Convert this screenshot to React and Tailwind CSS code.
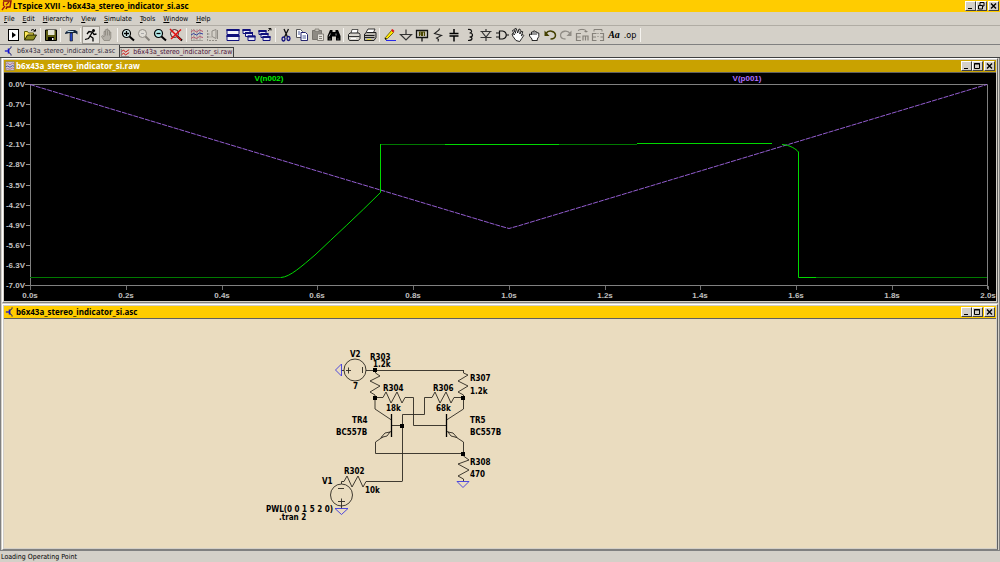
import React, { useState } from 'react';

const icons = {
  run: (
    <>
      <rect x="2.5" y="2.5" width="10" height="11" fill="#fff" stroke="#000" />
      <path d="M6 5v6l4-3z" fill="#000" />
    </>
  ),
  open: (
    <>
      <path d="M2.5 12.5v-8h3l1 1.5h5v2" fill="#ffe95c" stroke="#5c5c00" />
      <path d="M2.5 13l3-5h9l-3 5z" fill="#8c8c1e" stroke="#222200" />
      <path d="M9 3.5c1.5-1.5 3-1 4 .5m.5-1.8v2h-2" fill="none" stroke="#000" />
    </>
  ),
  save: (
    <>
      <path d="M2.5 3h11v10.5h-11z" fill="#5d5d12" stroke="#000" />
      <path d="M5 3h6.5v5h-6.5z" fill="#e4e4d4" />
      <path d="M5 10h6v3.5h-6z" fill="#000" />
      <path d="M9 11h1.5v2h-1.5z" fill="#fff" />
    </>
  ),
  hammer: (
    <>
      <path d="M2 6.5c1-3 4-3.5 7-3.5h3l2.5 1.5v3l-2-1.5h-6c-2 0-2 1-4.5 1z" fill="#12243c" />
      <path d="M4.5 4.5h6" stroke="#b9d8ee" />
      <path d="M7 6h2.5v8h-2.5z" fill="#2444c8" stroke="#111" strokeWidth=".6" />
    </>
  ),
  runner: (
    <>
      <circle cx="10.5" cy="3.5" r="1.5" fill="#000" />
      <path d="M9.5 5l-2.5 4 3 2v3.5M7 9l-1.5 2.5-3.5 1M4 7l2-2.5 3.5.5 1.5 2.5 2.5-.5" fill="none" stroke="#000" strokeWidth="1.3" />
    </>
  ),
  halt: (
    <path d="M5 13.5l-2.5-4 .8-1 1.7 1.5v-5.5h1.2v-1.7h1.5v-.8h1.3v1.5h1.5v1.5h1.3v6l-1.3 2.5zM6.5 4v4.5m2-5v5m2-4v4" fill="#b4b0a8" stroke="#8a867e" strokeWidth=".8" />
  ),
  zoomIn: (
    <>
      <circle cx="6.5" cy="6.5" r="4" fill="#d5efef" stroke="#000" strokeWidth="1.2" />
      <path d="M4 6.5h5M6.5 4v5" stroke="#000" strokeWidth="1.3" />
      <path d="M9.5 9.5l4.5 4" stroke="#000" strokeWidth="2" />
    </>
  ),
  pan: (
    <>
      <circle cx="6.5" cy="6.5" r="4" fill="#e0ddd6" stroke="#918d86" />
      <path d="M9.5 9.5l4 4" stroke="#85817a" strokeWidth="2" />
      <path d="M5 6.5h3" stroke="#aaa" />
    </>
  ),
  zoomOut: (
    <>
      <circle cx="6.5" cy="6.5" r="4" fill="#b5ecec" stroke="#000" strokeWidth="1.2" />
      <path d="M4.5 6.5h4" stroke="#000" strokeWidth="1.3" />
      <path d="M9.5 9.5l4.5 4" stroke="#000" strokeWidth="2" />
    </>
  ),
  zoomFit: (
    <>
      <circle cx="6.5" cy="6.5" r="4" fill="#e8d0cc" stroke="#402020" />
      <path d="M9.5 9.5l4.5 4" stroke="#000" strokeWidth="2" />
      <path d="M2 2l11 11M13 2.5l-10 9.5" stroke="#e01010" strokeWidth="1.5" />
    </>
  ),
  autorange: (
    <>
      <path d="M2.5 2v12M2 13.5h12M5 2v11M8 2v11M11 2v11" stroke="#85817a" strokeWidth=".6" />
      <path d="M2 5l2.5-2 3 2 3-2 3.5 1.5" fill="none" stroke="#b8586c" />
      <path d="M2 8l2.5-1.5 3 1.5 3-2 3.5 1" fill="none" stroke="#333e9c" />
      <path d="M2 11.5l2.5-1.5 3 1.5 3-2 3.5 1" fill="none" stroke="#b8586c" />
    </>
  ),
  plotSetup: (
    <>
      <path d="M2.5 3v10.5h10M2.5 7h3M2.5 10h4" fill="none" stroke="#918d86" strokeDasharray="2 1" />
      <path d="M7 4l4-1.5v9l-4-2zM12.5 3v9" fill="none" stroke="#918d86" />
    </>
  ),
  tile: (
    <>
      <path d="M2 2.5h12v5h-12zM2 8.5h12v5h-12z" fill="#f4f4f8" stroke="#10107c" />
      <path d="M1.5 3h13M1.5 9h13" stroke="#10107c" strokeWidth="2" />
    </>
  ),
  cascade: (
    <>
      <path d="M2 2.5h7v4h-7zM4.5 5.5h7v4h-7zM7 9h7v4.5h-7z" fill="#e8e8f4" stroke="#10107c" />
      <path d="M1.5 3h8M4 6h8M6.5 9.5h8" stroke="#10107c" strokeWidth="2" />
    </>
  ),
  closeAll: (
    <>
      <path d="M2 3.5h7v4h-7zM4 6.5h7v4h-7zM6 9.5h7v4h-7z" fill="#e8e8f4" stroke="#10107c" />
      <path d="M1.5 4h8M3.5 7h8M5.5 10h8" stroke="#10107c" strokeWidth="1.8" />
      <path d="M11 4l3-2.5M11.5 1.5h2.5v2" fill="none" stroke="#111" />
    </>
  ),
  cut: (
    <>
      <path d="M6 2l3.5 8M10.5 2l-4 8" stroke="#111" strokeWidth="1.3" />
      <ellipse cx="5.5" cy="12" rx="1.5" ry="2" fill="none" stroke="#10107c" strokeWidth="1.3" />
      <ellipse cx="10.5" cy="11.5" rx="1.5" ry="2" fill="none" stroke="#10107c" strokeWidth="1.3" />
    </>
  ),
  copy: (
    <>
      <path d="M2.5 2.5h4l2 2v6h-6z" fill="#fff" stroke="#555" />
      <path d="M7 5.5h4.5l2 2v6h-6.5z" fill="#fff" stroke="#23236e" />
      <path d="M4 5h2M4 7h2M8.5 9h3.5M8.5 11h3.5" stroke="#4a5a96" />
    </>
  ),
  paste: (
    <>
      <path d="M2.5 3.5h9v9h-9z" fill="#8e8a83" stroke="#77736c" />
      <path d="M5 2h4v2.5h-4z" fill="#c4c0b8" stroke="#77736c" strokeWidth=".7" />
      <path d="M7.5 7h6v6.5h-6z" fill="#e4e1da" stroke="#85817a" />
      <path d="M9 9.5h3M9 11.5h3" stroke="#85817a" />
    </>
  ),
  find: (
    <>
      <path d="M4 3h2.5v2h3v-2h2.5l2.5 6v4.5h-4.5v-4h-4v4h-4.5v-4.5z" fill="#000" />
      <path d="M4.5 6.5l-1.5 3M10 6.5v2M4 11.5v1M12 11.5v1" stroke="#bbb" strokeWidth=".8" />
    </>
  ),
  print: (
    <>
      <path d="M5 6.5l1-4h6l-1 4" fill="#fff" stroke="#333" strokeWidth=".8" />
      <path d="M2.5 7.5l1.5-1.5h9l1 1.5v4l-1.5 2h-9l-1-1.5z" fill="#d8d5ce" stroke="#222" />
      <path d="M3 9.5h10.5" stroke="#333" />
      <path d="M5 11.5h5" stroke="#fff" />
    </>
  ),
  printSetup: (
    <>
      <path d="M4 5.5l2-3.5h7l-1.5 3.5" fill="#fff" stroke="#222" strokeWidth=".9" />
      <path d="M2.5 7l2-1.5h9.5v5l-2 3h-9.5z" fill="#b8b5ae" stroke="#222" />
      <path d="M3 8.5h9.5M3 10.5h9.5" stroke="#222" />
      <path d="M5 12.5h4" stroke="#e4d820" />
    </>
  ),
  pencil: (
    <>
      <path d="M3.5 10.5l6-7 2 2-6 6-2.5.5z" fill="#ffe800" stroke="#5c5000" strokeWidth=".8" />
      <path d="M9 3l1.5-1 2 2-1.5 1.5z" fill="#e01818" />
      <path d="M2.5 10.5l2.5 1.5-1.5 1z" fill="#000" />
      <path d="M4 13.5h10" stroke="#2828e8" />
    </>
  ),
  ground: <path d="M8 2.5v5M2.5 7.5h11l-5.5 5.5z" fill="none" stroke="#333" strokeWidth="1.2" />,
  label: (
    <>
      <path d="M2.5 3.5h11v7h-11zM8 10.5v4" fill="none" stroke="#111" strokeWidth="1.3" />
      <path d="M5.5 9v-4h2v4M8.5 9v-4h2v4M5.5 7h2" fill="none" stroke="#494600" strokeWidth="1.2" />
    </>
  ),
  resistor: <path d="M9.5 1.5l-.5 1.500-4.500 3.500 7 2-5 2.500 2 1.500-.5 2" fill="none" stroke="#222" strokeWidth="1.1" />,
  capacitor: <path d="M8 2v4M8 9.5v5M3.5 6.5h9M3.5 9h9" stroke="#000" strokeWidth="1.5" />,
  inductor: <path d="M6 2.5c4.5-.5 4.5 3.5 1.5 3.5 4 0 4 4 0 4 3.5 0 3.5 3.5-1.5 3.5" fill="none" stroke="#111" strokeWidth="1.2" />,
  diode: <path d="M8 2v2M8 10v4M2.5 4.500h11M4 5l4 5 4-5M2.5 10.5h11" fill="none" stroke="#333" strokeWidth="1.2" />,
  gate: <path d="M2 6h3M2 10h3M5.5 4h3c5 1 5 7 0 8h-3zM12 8h3" fill="none" stroke="#111" strokeWidth="1.2" />,
  move: (
    <path d="M6 13.5l-3-4-1-2.5 1-.5 1.5 1.5-2-4.500 1.2-.7 2 3.5-1-4.500 1.5-.3 1.5 4.5 1.3-4 1.3.5-.5 4.5 2-3 1 .8-1.5 4 1.7-1.3.7 1-2 3-2 3z" fill="#fff" stroke="#111" strokeWidth=".9" />
  ),
  drag: (
    <path d="M6 13.5v-1.5l-2.5-3v-2l2 .5v-2.5h1.5l.5-1h1.5l.5 1h1.5l.3 1h1.5v3.5l-1.5 2.5v1.5zM6 6v2M8 5v3M10 5.5v2.5" fill="#fff" stroke="#111" strokeWidth=".9" />
  ),
  undo: (
    <>
      <path d="M4 6.5c2.5-4 9-2.5 9.5 1.5 0 3-2.5 4-5 4" fill="none" stroke="#444000" strokeWidth="1.5" />
      <path d="M2.5 3.5v5.5h5z" fill="#444000" />
    </>
  ),
  redo: (
    <>
      <path d="M12 6.5c-2.5-4-9-2.5-9.5 1.5 0 3 2.5 4 5 4" fill="none" stroke="#918d86" strokeWidth="1.3" />
      <path d="M13.5 3.5v5.5h-5z" fill="#918d86" />
    </>
  ),
  rotate: (
    <>
      <path d="M7 6.5h-4.5v7h4.500M2.5 10h4M9 13.5v-4.500h5v4.500M11.5 9v4.500" fill="none" stroke="#85817a" strokeWidth="1.2" />
      <path d="M4 3.5c2-1.5 6-1.5 8 0v2M10.5 4.5h3" fill="none" stroke="#85817a" />
    </>
  ),
  mirror: (
    <>
      <path d="M6.5 6.5h-4v7h4M2.5 10h3.5M10 6.5h3.5v7h-3.5M13.5 10h-3" fill="none" stroke="#85817a" strokeWidth="1.2" />
      <path d="M4 4.5v-2h8v2M8 6v1M8 9v1" fill="none" stroke="#85817a" />
    </>
  ),
};

const toolGroups = [
  { items: [['run', 'Run'], ['open', 'Open']], wide: true },
  { items: [['save', 'Save']] },
  { items: [['hammer', 'Control Panel']] },
  { items: [['runner', 'Run simulation'], ['halt', 'Halt']], wide: true },
  { items: [['zoomIn', 'Zoom in'], ['pan', 'Pan'], ['zoomOut', 'Zoom out'], ['zoomFit', 'Zoom to fit']], wide: true },
  { items: [['autorange', 'Autorange'], ['plotSetup', 'Plot setup']], bare: true },
  { items: [['tile', 'Tile'], ['cascade', 'Cascade'], ['closeAll', 'Close all']], wide: true },
  { items: [['cut', 'Cut'], ['copy', 'Copy'], ['paste', 'Paste'], ['find', 'Find']] },
  { items: [['print', 'Print'], ['printSetup', 'Print setup']] },
  {
    items: [
      ['pencil', 'Wire'], ['ground', 'Ground'], ['label', 'Label net'], ['resistor', 'Resistor'],
      ['capacitor', 'Capacitor'], ['inductor', 'Inductor'], ['diode', 'Diode'], ['gate', 'Component'],
      ['move', 'Move'], ['drag', 'Drag'], ['undo', 'Undo'], ['redo', 'Redo'], ['rotate', 'Rotate'],
      ['mirror', 'Mirror'], ['text', 'Text'], ['op', 'SPICE directive'],
    ],
    wide: true,
  },
];

const menus = ['File', 'Edit', 'Hierarchy', 'View', 'Simulate', 'Tools', 'Window', 'Help'];

const Transistor = ({ className }) => (
  <svg viewBox="0 0 12 12" className={className} aria-hidden="true">
    <path d="M1 6h4" stroke="#1010d0" strokeWidth="1.5" />
    <path d="M5.5 3v6" stroke="#1010d0" strokeWidth="2" />
    <path d="M6 4l2.5-2V.5M6 8l2.5 2v1.5" fill="none" stroke="#1c1c70" strokeWidth="1.2" />
  </svg>
);

const Wave = ({ className }) => (
  <svg viewBox="0 0 12 12" className={className} aria-hidden="true">
    <rect x="1" y="1" width="10" height="10" fill="#cbc8d4" stroke="#77777f" strokeWidth=".6" />
    <path d="M1 4l2-1.5 3 2 3-2 2 1" fill="none" stroke="#b06080" />
    <path d="M1 7l2-1 3 1.5 3-2 2 1" fill="none" stroke="#303aa0" />
    <path d="M1 10l2-1 3 1 3-1.5 2 1" fill="none" stroke="#b06080" />
  </svg>
);

const RedWave = ({ className }) => (
  <svg viewBox="0 0 12 12" className={className} aria-hidden="true">
    <path d="M1.5 1v9.5h9.5" fill="none" stroke="#666" />
    <path d="M2 4l2.5-1.5 2 2.5 4.5-3M2 8l2.5-2 2 2.5 4.5-3" fill="none" stroke="#d01818" strokeWidth="1.2" />
  </svg>
);

const captionGlyphs = {
  Minimize: <path d="M3 7.5h4" stroke="#000" />,
  Maximize: <path d="M2.5 2.5h5v5h-5zM2 3h6" fill="none" stroke="#000" />,
  Restore: <path d="M4 4v-2.5h4v3.500h-1.5M2.5 4.5h4v3.5h-4z" fill="none" stroke="#000" />,
  Close: <path d="M3 2.5l5 5M8 2.5l-5 5" stroke="#000" strokeWidth="1.4" />,
};

const CaptionButtons = ({ middle }) => (
  <div className="flex">
    {['Minimize', middle, 'Close'].map((name) => (
      <button
        key={name}
        aria-label={name}
        className="h-2.5 w-[11px] border border-t-white border-l-white border-r-[#404040] border-b-[#404040] bg-[#d4d0c8] last:ml-px"
      >
        <svg viewBox="1 1 9 8" className="block h-2 w-[9px]">{captionGlyphs[name]}</svg>
      </button>
    ))}
  </div>
);

const ChildWindow = ({ title, icon, active, grow, children }) => (
  <section
    className={`flex flex-col border border-t-white border-l-white border-r-[#606060] border-b-[#808080] bg-[#d4d0c8] p-px ${grow ? 'grow' : ''}`}
  >
    <header
      className={`flex h-3 items-center justify-between px-px ${active ? 'bg-[#ffcc00] text-black' : 'bg-[#c9a200] text-white'}`}
    >
      <div className="flex items-center gap-px">
        {icon}
        <h2 className="font-['Open_Sans',sans-serif] text-[8px] leading-3 font-bold">{title}</h2>
      </div>
      <CaptionButtons middle="Maximize" />
    </header>
    <div className="flex grow flex-col border-t border-[#606060]">{children}</div>
  </section>
);

const yLabels = ['0.0V', '-0.7V', '-1.4V', '-2.1V', '-2.8V', '-3.5V', '-4.2V', '-4.9V', '-5.6V', '-6.3V', '-7.0V'];
const xLabels = ['0.0s', '0.2s', '0.4s', '0.6s', '0.8s', '1.0s', '1.2s', '1.4s', '1.6s', '1.8s', '2.0s'];

const Plot = () => (
  <svg viewBox="4 73 992 228" className="block h-auto w-full bg-black font-['Liberation_Sans',sans-serif] text-[8px] font-bold">
    <path d="M30.5 84.5V289M25 84.5H987.5V289M25 285.5H987.5" fill="none" stroke="#808080" />
    {yLabels.map((label, i) => (
      <g key={label}>
        <path d={`M26 ${Math.round(84 + i * 20.1) + 0.5}h4`} stroke="#909090" />
        <text x="25" y={Math.round(87 + i * 20.1)} textAnchor="end" fill="#c0c0c0">{label}</text>
      </g>
    ))}
    {xLabels.map((label, i) => (
      <g key={label}>
        <path d={`M${Math.round(30 + i * 95.75) + 0.5} 286v4`} stroke="#707070" />
        <text x={Math.round(30 + i * 95.75)} y="298" textAnchor="middle" fill="#c0c0c0">{label}</text>
      </g>
    ))}
    <text x="269" y="81" textAnchor="middle" fill="#00f000">V(n002)</text>
    <text x="747" y="81" textAnchor="middle" fill="#b070ff">V(p001)</text>
    <path d="M30 84.5L500 226L509 228.5L518 226L987 84.5" fill="none" stroke="#a468e8" strokeWidth=".9" strokeDasharray="5 1" />
    <g fill="none">
      <path d="M30 277.5H281M816 277.5H987M381 144.5H445M559 144.5H637" stroke="#007a00" />
      <path d="M281 277.5C290 277 302 266 315 255C335 236 358 215 380.5 192.5V144M445 144.5H559M637 143.5H772M782 144.5C790 145 796 149 798.5 152V277.5H816" stroke="#00d800" />
    </g>
  </svg>
);

const parts = [
  ['V2', 350, 357], ['R303', 370, 360], ['1.2k', 373, 367], ['7', 353, 389],
  ['R304', 383, 391], ['18k', 386, 411], ['R306', 433, 391], ['68k', 436, 411],
  ['R307', 470, 381], ['1.2k', 470, 394], ['TR5', 470, 423], ['BC557B', 470, 435],
  ['TR4', 352, 423], ['BC557B', 336, 435], ['R308', 470, 465], ['470', 470, 477],
  ['R302', 344, 474], ['V1', 322, 484], ['10k', 365, 493],
  ['PWL(0 0 1 5 2 0)', 266, 512], ['.tran 2', 279, 520],
];

const Schematic = () => (
  <svg viewBox="4 319 992 229" preserveAspectRatio="xMinYMin meet" className="block h-auto w-full text-[8px] font-bold">
    <g fill="none" stroke="#2c2820" strokeWidth=".9">
      {/* sources */}
      <circle cx="355" cy="370" r="11" />
      <path d="M341 370.5h3M346 370.5h5M348.5 367.5v6M362.5 367v6M366 370.5H463.5" />
      <circle cx="341.5" cy="495" r="11" />
      <path d="M338 488.5h6M338 501.5h7M341.5 498.5v10" />
      {/* resistors */}
      <path d="M375.5 370V373L380 376L370 381L380 386L370 392L375 395V409L391.5 420" />
      <path d="M463.5 370V373L468 375L458 381L468 386L458 392L463.5 395V409L446.5 420" />
      <path d="M375 397.5H383L386 392L391 403L397 392L402 403L405 397.5H413.5V425.5H446.5" />
      <path d="M463 397.5H454L451 403L446 392L440 403L435 392L432 397.5H424.5V414.5H402.5V481" />
      <path d="M463.5 453V456L469 460L458 464L469 470L458 476L463.5 479V481" />
      <path d="M341.5 484V481.5H344L347 476L352 487L358 476L363 487L366 481.5H402.5" />
      {/* transistors */}
      <path d="M391.5 425.5H402.5M391.5 431L375.5 442V453.5H463.5V442L446.5 431" />
      <path d="M391.5 414v23M446.5 414v23" stroke="#000" strokeWidth="1.3" />
      <path d="M390 432l-5 1-4 4.5 6-1.5zM448 432l5 1 4 4.5-6-1.5z" fill="#eadcbf" />
    </g>
    <path d="M373 368h4v4h-4zM373 396h4v4h-4zM461 396h4v4h-4zM400 424h4v4h-4zM461 452h4v4h-4z" fill="#000" />
    <path d="M341.5 364v12l-6-6zM335 508.5h13l-6.5 6zM457 481.5h12l-6 6z" fill="none" stroke="#3c38e0" strokeWidth=".9" />
    {parts.map(([label, x, y]) => (
      <text key={`${label}-${x}-${y}`} x={x} y={y} fill="#000">{label}</text>
    ))}
  </svg>
);

const App = () => {
  const [tab, setTab] = useState('asc');

  return (
    <div className="flex min-h-screen flex-col bg-[#d4d0c8] font-['DejaVu_Sans_Condensed','DejaVu_Sans',sans-serif] text-[7px] text-black">
      <header className="flex h-3 items-center justify-between bg-[#ffcc00] px-px">
        <div className="flex items-center">
          <svg viewBox="0 0 12 12" className="size-3" aria-hidden="true">
            <path d="M2 1h8l-1 6h-3l-1 2" fill="none" stroke="#8c1010" strokeWidth="1.5" />
            <path d="M2.5 2v4M1 10l3-4M5 5l3-3" stroke="#a01818" strokeWidth="1.3" />
          </svg>
          <h1 className="font-['Open_Sans',sans-serif] text-[8px] leading-3 font-bold">LTspice XVII - b6x43a_stereo_indicator_si.asc</h1>
        </div>
        <CaptionButtons middle="Restore" />
      </header>

      <nav className="flex h-3.5 items-center gap-2 border-b border-[#b0aca4] pl-1">
        {menus.map((name) => (
          <button key={name} className="leading-3">
            <span className="underline">{name[0]}</span>{name.slice(1)}
          </button>
        ))}
      </nav>

      <div className="flex h-[19px] items-center border-b border-[#808080] pl-1.5">
        {toolGroups.map(({ items, wide, bare }) => (
          <div key={items[0][0]} className="flex items-center">
            {items.map(([id, name]) => (
              <button
                key={id}
                aria-label={name}
                className={`flex size-4 items-center justify-center ${id === 'runner' ? 'bg-[#e4e1dc] outline outline-[#a09c94]' : ''}`}
              >
                {id === 'text' && <span className="font-['Liberation_Serif',serif] text-[10px] leading-4 font-bold italic">Aa</span>}
                {id === 'op' && <span className="text-[9px] leading-4">.op</span>}
                {icons[id] && <svg viewBox="0 0 16 16" className="block size-4">{icons[id]}</svg>}
              </button>
            ))}
            <span className={`mr-0.5 h-3.5 w-px ${wide ? 'ml-0.5' : 'ml-px'} ${bare ? '' : 'bg-[#f4f2ee]'}`} />
          </div>
        ))}
      </div>

      <div className="flex h-[13px] items-end border-b border-[#404040] pl-1">
        <button
          onClick={() => setTab('asc')}
          aria-pressed={tab === 'asc'}
          className="flex h-3 items-center gap-[3px] border-r border-[#404040] pr-1 text-[#302838]"
        >
          <Transistor className="size-2.5" />
          b6x43a_stereo_indicator_si.asc
        </button>
        <button
          onClick={() => setTab('raw')}
          aria-pressed={tab === 'raw'}
          className="flex h-2.5 items-center gap-[3px] border-t border-r border-[#404040] pr-px text-[#4c1038]"
        >
          <RedWave className="size-2.5" />
          b6x43a_stereo_indicator_si.raw
        </button>
      </div>

      <main className="flex grow flex-col gap-px border-x border-x-[#808080] px-px">
        <ChildWindow title="b6x43a_stereo_indicator_si.raw" icon={<Wave className="size-2.5" />}>
          <Plot />
        </ChildWindow>
        <ChildWindow title="b6x43a_stereo_indicator_si.asc" icon={<Transistor className="size-2.5" />} active grow>
          <div className="grow bg-[#eadcbf]">
            <Schematic />
          </div>
        </ChildWindow>
      </main>

      <footer className="h-3 border-t border-[#808080] pl-px leading-3">Loading Operating Point</footer>
    </div>
  );
};

export default App;
